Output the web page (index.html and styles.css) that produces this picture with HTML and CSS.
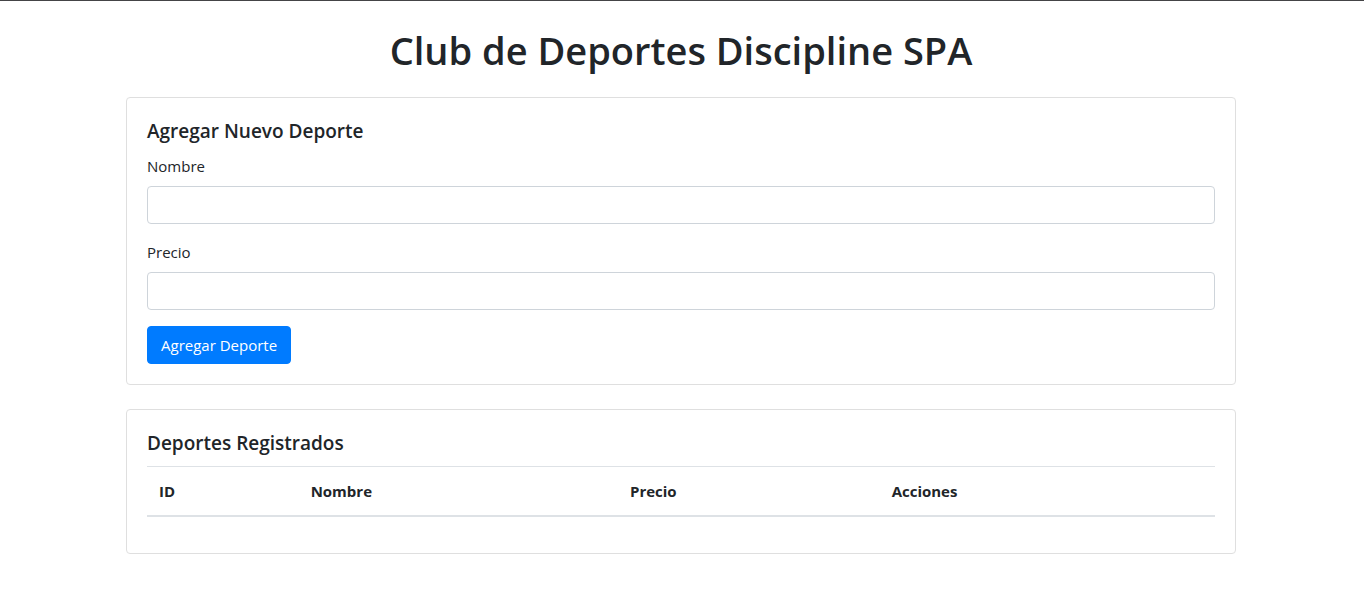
FILE: index.html
```html
<!DOCTYPE html>
<html lang="es">
<head>
<meta charset="utf-8">
<meta name="viewport" content="width=device-width, initial-scale=1">
<title>Club de Deportes Discipline SPA</title>
<link rel="stylesheet" href="styles.css">
</head>
<body>
<main class="container">
  <h1 class="page-title">Club de Deportes Discipline SPA</h1>
  <section class="card">
    <h2 class="card-title">Agregar Nuevo Deporte</h2>
    <form>
      <div class="form-group">
        <label for="nombre">Nombre</label>
        <input class="form-control" type="text" id="nombre">
      </div>
      <div class="form-group">
        <label for="precio">Precio</label>
        <input class="form-control" type="number" id="precio">
      </div>
      <button class="btn" type="submit">Agregar Deporte</button>
    </form>
  </section>
  <section class="card">
    <h2 class="card-title">Deportes Registrados</h2>
    <table class="table">
      <colgroup><col class="col-id"><col class="col-name"><col class="col-price"><col></colgroup>
      <thead>
        <tr><th scope="col">ID</th><th scope="col">Nombre</th><th scope="col">Precio</th><th scope="col">Acciones</th></tr>
      </thead>
      <tbody></tbody>
    </table>
  </section>
</main>
</body>
</html>
```
FILE: styles.css
```css
*, *::before, *::after { box-sizing: border-box; }

html { background: #fff; }

body {
  margin: 0 2px 0 0;
  border-top: 1px solid #444446;
  color: #212529;
  font-family: "Segoe UI", "Open Sans", "Noto Sans", sans-serif;
  font-size: 15px;
  line-height: 24px;
}

.container {
  width: 100%;
  max-width: 1140px;
  margin: 24px auto 0;
  padding: 0 16px 0 14px;
}

.page-title {
  margin: 0 0 22px;
  font-size: 38px;
  font-weight: 600;
  line-height: 50px;
  text-align: center;
}

.card {
  margin-bottom: 24px;
  padding: 20px;
  border: 1px solid #dfdfdf;
  border-radius: 4px;
}

.card-title {
  margin: 0 0 10px;
  font-size: 19px;
  font-weight: 600;
  line-height: 26px;
}

.form-group { margin-bottom: 16px; }

label {
  display: block;
  margin-bottom: 8px;
}

.form-control {
  display: block;
  width: 100%;
  height: 38px;
  padding: 6px 12px;
  border: 1px solid #ced4da;
  border-radius: 4px;
  background: #fff;
  color: #495057;
  font: inherit;
}

.btn {
  display: block;
  padding: 6px 13px;
  border: 1px solid #007bff;
  border-radius: 4px;
  background: #007bff;
  color: #fff;
  font: inherit;
  cursor: pointer;
}

.table {
  width: 100%;
  margin-bottom: 16px;
  border-collapse: collapse;
}

.table th {
  padding: 12px;
  border-top: 1px solid #dee2e6;
  border-bottom: 2px solid #dee2e6;
  font-weight: 700;
  text-align: left;
}

.col-id { width: 14.2%; }
.col-name { width: 29.9%; }
.col-price { width: 24.5%; }
```
